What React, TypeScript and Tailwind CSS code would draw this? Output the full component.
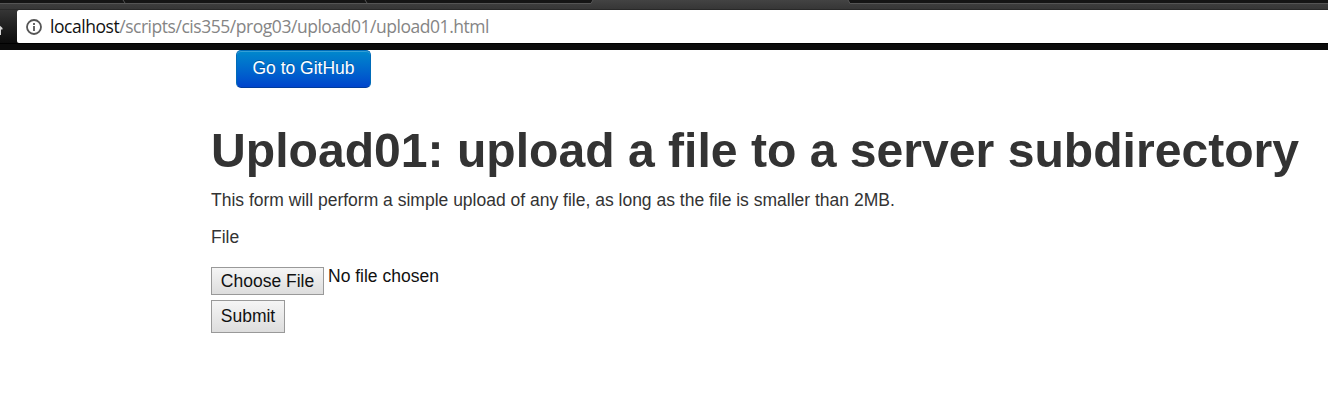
import React from "react";

function BrowserBar() {
  return (
    <header className="flex h-[50px] flex-col bg-[#0b0b0b]">
      <svg className="block h-[10px] w-full shrink-0" width="1328" height="10" viewBox="0 0 1328 10">
        <defs>
          <linearGradient id="bar" x1="0" y1="0" x2="0" y2="1">
            <stop offset="0" stopColor="#434343" />
            <stop offset="1" stopColor="#353535" />
          </linearGradient>
        </defs>
        <rect width="1328" height="10" fill="url(#bar)" />
        <path d="M0 0H593L591 3H0ZM848 0H1328V3H850Z" fill="#151515" />
        <path d="M0 3.5H591L593 0M848 0L850 3.5H1328" fill="none" stroke="#555555" />
        <path d="M123 0L125 3M365 0L367 3" stroke="#555555" />
        <rect y="9" width="1328" height="1" fill="#292929" />
      </svg>
      <div className="flex h-[33px] shrink-0">
        <div className="flex w-[17px] shrink-0 items-center bg-gradient-to-b from-[#353535] to-[#0c0c0c] pt-[6px]">
          <svg width="4" height="12" viewBox="0 0 4 12">
            <path d="M-3 -1L2.5 4V5.5H1V11H-3Z" fill="#d6d6d6" />
          </svg>
        </div>
        <div className="flex flex-1 items-center rounded-l-[2px] bg-white pl-[9px]">
          <svg width="16" height="16" viewBox="0 0 16 16" fill="none" stroke="#555555">
            <circle cx="8" cy="8" r="7" strokeWidth="1.8" />
            <path d="M8 7V12M8 4V6" strokeWidth="1.8" />
          </svg>
          <span className="ml-2 whitespace-nowrap font-['Open_Sans','Noto_Sans',sans-serif] text-[17.5px] leading-[25px] tracking-[-0.46px] text-[#858585]">
            <span className="text-[#111111]">localhost</span>/scripts/cis355/prog03/upload01/upload01.html
          </span>
        </div>
      </div>
      <div className="h-[7px] border-t border-black bg-[#0b0b0b]" />
    </header>
  );
}

export default function App() {
  return (
    <div className="min-h-[410px] w-full overflow-hidden bg-white font-['Liberation_Sans',Arial,sans-serif] text-[17.5px] leading-[25px] text-[#333333]">
      <BrowserBar />
      <main className="flex flex-col items-start pl-[211px]">
        <a
          href="#"
          className="ml-[25px] flex h-[38px] w-[135px] items-center justify-center rounded-[5px] border border-[#006bb8] border-b-[#003c9c] bg-gradient-to-b from-[#0088cc] to-[#0044cc] pb-[2px] text-white shadow-[inset_0_1px_0_rgba(255,255,255,0.2)] [text-shadow:0_-1px_0_rgba(0,0,0,0.25)]"
        >
          Go to GitHub
        </a>
        <h1 className="mt-[37px] whitespace-nowrap text-[48.125px] font-bold leading-[50px]">
          Upload01: upload a file to a server subdirectory
        </h1>
        <p className="mt-[13px]">
          This form will perform a simple upload of any file, as long as the file is smaller than 2MB.
        </p>
        <p className="mt-[12px]">File</p>
        <form className="mt-[17px] flex flex-col items-start text-[#111111]" onSubmit={(e) => e.preventDefault()}>
          <div className="flex items-start">
            <button
              type="button"
              className="h-[28px] w-[113px] border border-[#999999] bg-gradient-to-b from-[#f5f5f5] to-[#dddddd] text-center leading-[26px]"
            >
              Choose File
            </button>
            <span className="ml-[4px] -mt-[3px]">No file chosen</span>
          </div>
          <button
            type="submit"
            className="mt-[5px] h-[33px] w-[74px] border border-[#999999] bg-gradient-to-b from-[#f5f5f5] to-[#dddddd] text-center leading-[29px]"
          >
            Submit
          </button>
        </form>
      </main>
    </div>
  );
}
